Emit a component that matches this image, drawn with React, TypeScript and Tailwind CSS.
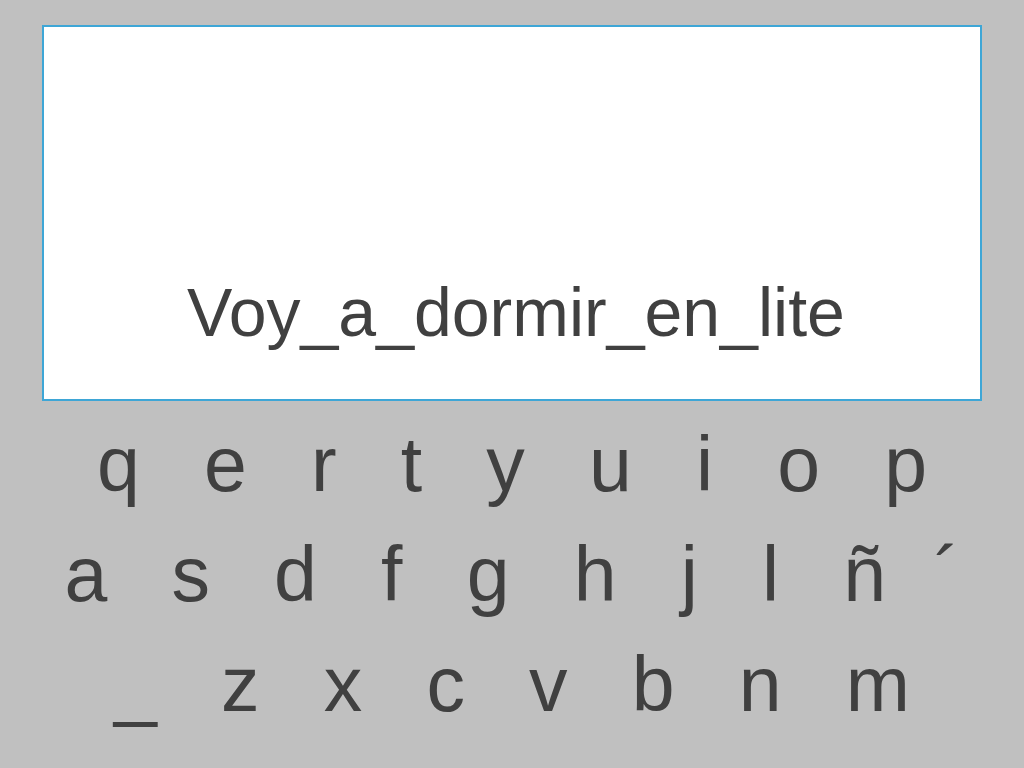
const rows = [
  ["q   e   r   t   y   u   i   o   p"],
  ["a   s   d   f   g   h   j   l   ñ  ", "´"],
  ["_   z   x   c   v   b   n   m"],
];

export default function App() {
  return (
    <main
      className="w-[1024px] h-[768px] bg-[#c0c0c0] text-[#404040] overflow-hidden pt-[25px]"
      style={{ fontFamily: '"Liberation Sans", Arial, sans-serif' }}
    >
      <div className="ml-[42px] w-[940px] h-[376px] bg-white border-2 border-[#3ea6d6] flex flex-col justify-end pb-[53px] pl-[8px]">
        <p className="text-center text-[68px] leading-[68px]">Voy_a_dormir_en_lite</p>
      </div>
      <div className="mt-[8px] flex flex-col">
        {rows.map((row, i) => (
          <div key={i} className="text-center whitespace-pre text-[77px] leading-[110px]">
            {row[0]}
            {row[1] && <span className="pl-[5px]">{row[1]}</span>}
          </div>
        ))}
      </div>
    </main>
  );
}
